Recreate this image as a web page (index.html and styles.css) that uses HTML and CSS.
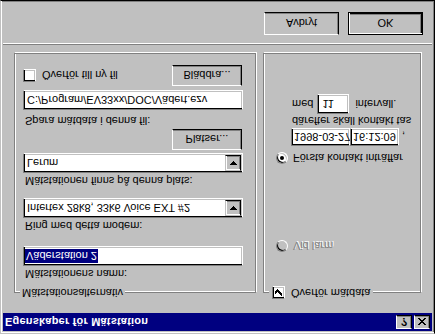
FILE: index.html
```html
<!DOCTYPE html>
<html lang="sv">
<head>
<meta charset="utf-8">
<title>Egenskaper för Mätstation</title>
<link rel="stylesheet" href="styles.css">
</head>
<body>
<div class="window">
  <div class="titlebar">
    <span class="title">Egenskaper för Mätstation</span>
    <span class="capbtn help">?</span>
    <span class="capbtn close"><svg width="8" height="7" viewBox="0 0 8 7" shape-rendering="crispEdges"><path fill="#000" d="M0 0h2v1h-2z M6 0h2v1h-2z M1 1h2v1h-2z M5 1h2v1h-2z M2 2h4v1h-4z M3 3h2v1h-2z M2 4h4v1h-4z M1 5h2v1h-2z M5 5h2v1h-2z M0 6h2v1h-2z M6 6h2v1h-2z"/></svg></span>
  </div>
  <div class="page">
    <fieldset class="group group-left">
      <legend>Mätstationsalternativ</legend>
      <div class="label l1">Mätstationens namn:</div>
      <div class="field f-name"><span class="sel">Väderstation 2</span></div>
      <div class="label l2">Ring med detta modem:</div>
      <div class="field combo c-modem"><span class="val">Intertex 28k8, 33k6 Voice EXT #2</span><span class="drop"><svg width="7" height="4" viewBox="0 0 7 4" shape-rendering="crispEdges"><path fill="#000" d="M0 0h7v1h-1v1h-1v1h-1v1h-1v-1h-1v-1h-1v-1h-1z"/></svg></span></div>
      <div class="label l3">Mätstationen finns på denna plats:</div>
      <div class="field combo c-place"><span class="val">Lerum</span><span class="drop"><svg width="7" height="4" viewBox="0 0 7 4" shape-rendering="crispEdges"><path fill="#000" d="M0 0h7v1h-1v1h-1v1h-1v1h-1v-1h-1v-1h-1v-1h-1z"/></svg></span></div>
      <div class="btnrow r1"><button class="btn small">Platser...</button></div>
      <div class="label l4">Spara mätdata i denna fil:</div>
      <div class="field f-path"><span class="val">C:/Program/EV33xx/DOC/Vädert.ezv</span></div>
      <div class="btnrow r2">
        <span class="check"><span class="box"></span><span>Överför till ny fil</span></span>
        <button class="btn small">Bläddra...</button>
      </div>
    </fieldset>
    <fieldset class="group group-right">
      <legend><span class="box"><svg width="13" height="13" viewBox="0 0 13 13" shape-rendering="crispEdges"><path fill="#000" d="M9 3h1v1h-1z M8 4h2v1h-2z M3 5h1v1h-1z M7 5h3v1h-3z M3 6h2v1h-2z M6 6h3v1h-3z M3 7h5v1h-5z M4 8h3v1h-3z M5 9h1v1h-1z"/></svg></span><span>Överför mätdata</span></legend>
      <div class="radio r-alarm disabled"><span class="dot"></span><span class="rtext">Vid larm</span></div>
      <div class="radio r-first"><span class="dot on"></span><span class="rtext">Första kontakt inträffar</span></div>
      <div class="datetime"><div class="field date">1998-03-27</div><div class="field time">16:12:09</div><span class="comma">,</span></div>
      <div class="label l5">därefter skall kontakt tas</div>
      <div class="interval"><span>med</span><div class="field num">11</div><span>intervall.</span></div>
    </fieldset>
  </div>
  <div class="sep"></div>
  <div class="buttons">
    <button class="btn">Avbryt</button>
    <button class="btn default">OK</button>
  </div>
</div>
</body>
</html>
```

FILE: styles.css
```css
* { box-sizing: border-box; }
html, body { margin: 0; padding: 0; }
body {
  width: 435px;
  height: 334px;
  overflow: hidden;
  background: #c0c0c0;
  font-family: "Liberation Sans", Arial, sans-serif;
  font-size: 11px;
  color: #000;
}
.window {
  width: 435px;
  height: 334px;
  border: 1px solid;
  border-color: #c0c0c0 #000 #000 #c0c0c0;
  box-shadow: inset 1px 1px #fff, inset -1px -1px #808080;
  padding: 2px;
  background: #c0c0c0;
  display: flex;
  flex-direction: column;
  transform: scaleY(-1);
}
.titlebar {
  height: 18px;
  flex: none;
  background: #000080;
  display: flex;
  align-items: center;
  padding: 0 2px;
}
.title {
  flex: 1;
  color: #fff;
  font-weight: bold;
  font-size: 11px;
  line-height: 13px;
  letter-spacing: 0.2px;
  white-space: nowrap;
}
.capbtn {
  width: 16px;
  height: 14px;
  background: #c0c0c0;
  border: 1px solid;
  border-color: #fff #000 #000 #fff;
  box-shadow: inset -1px -1px #808080;
  display: flex;
  align-items: center;
  justify-content: center;
  font-weight: bold;
  font-size: 11px;
  line-height: 11px;
}
.help { margin-right: 2px; }
.page {
  flex: none;
  height: 268px;
  display: flex;
  align-items: flex-start;
  gap: 7px;
  padding: 14px 0 0 11px;
}
.group {
  margin: 0;
  min-width: 0;
  height: 246px;
  border: 1px solid #808080;
  box-shadow: inset 1px 1px #fff, 1px 1px #fff;
  padding: 0 0 0 8px;
}
.group-left { width: 242px; }
.group-right { width: 158px; padding-left: 12px; }
.group legend {
  height: 13px;
  line-height: 13px;
  padding: 0 2px;
  margin-left: -3px;
  background: #c0c0c0;
  white-space: nowrap;
}
.group-right legend {
  display: flex;
  align-items: center;
  gap: 6px;
  margin-left: -7px;
  padding: 0 3px 0 3px;
}
.label {
  height: 13px;
  line-height: 13px;
  padding-left: 2px;
  white-space: nowrap;
}
.field {
  height: 20px;
  background: #fff;
  border: 1px solid;
  border-color: #808080 #fff #fff #808080;
  box-shadow: inset 1px 1px #000, inset -1px -1px #c0c0c0;
  display: flex;
  align-items: center;
  padding: 1px 1px 1px 2px;
  white-space: nowrap;
  line-height: 13px;
}
.group-left .field { width: 220px; }
.l1 { margin-top: 6px; }
.f-name { margin-top: 1px; padding-left: 1px; }
.sel { background: #000080; color: #fff; height: 14px; line-height: 14px; padding: 0 1px 0 1px; }
.l2 { margin-top: 14px; }
.c-modem { margin-top: 1px; }
.l3 { margin-top: 11px; }
.c-place { margin-top: 1px; }
.combo .val { flex: 1; padding-left: 1px; }
.f-path .val { padding-left: 1px; }
.drop {
  width: 16px;
  height: 16px;
  background: #c0c0c0;
  border: 1px solid;
  border-color: #c0c0c0 #000 #000 #c0c0c0;
  box-shadow: inset 1px 1px #fff, inset -1px -1px #808080;
  display: flex;
  align-items: center;
  justify-content: center;
}
.btnrow {
  width: 219px;
  height: 21px;
  display: flex;
  align-items: center;
  justify-content: flex-end;
}
.r1 { margin-top: 3px; }
.l4 { margin-top: 2px; }
.f-path { margin-top: 4px; }
.r2 { margin-top: 4px; justify-content: space-between; }
.btn {
  width: 75px;
  height: 23px;
  padding: 0;
  margin: 0;
  background: #c0c0c0;
  border: 1px solid;
  border-color: #fff #000 #000 #fff;
  box-shadow: inset -1px -1px #808080;
  font-family: "Liberation Sans", Arial, sans-serif;
  font-size: 11px;
  color: #000;
}
.btn.small { width: 70px; height: 21px; }
.btn.default {
  border: 1px solid #000;
  box-shadow: inset 1px 1px #fff, inset -1px -1px #000, inset -2px -2px #808080;
}
.check { display: flex; align-items: center; gap: 6px; }
.box {
  width: 13px;
  height: 13px;
  flex: none;
  background: #fff;
  border: 1px solid;
  border-color: #808080 #fff #fff #808080;
  box-shadow: inset 1px 1px #000, inset -1px -1px #c0c0c0;
  display: block;
  position: relative;
}
.box svg { position: absolute; left: -1px; top: -1px; }
.radio { display: flex; align-items: center; gap: 5px; height: 12px; white-space: nowrap; }
.dot {
  width: 12px;
  height: 12px;
  flex: none;
  border-radius: 50%;
  background: #fff;
  border: 1px solid;
  border-color: #808080 #fff #fff #808080;
  box-shadow: inset 1px 1px #000, inset -1px -1px #c0c0c0;
  display: flex;
  align-items: center;
  justify-content: center;
}
.dot.on::after {
  content: "";
  width: 4px;
  height: 4px;
  border-radius: 50%;
  background: #000;
}
.disabled .dot { background: #c0c0c0; }
.disabled .rtext { color: #808080; text-shadow: 1px 1px #fff; }
.r-alarm { margin-top: 34px; }
.r-first { margin-top: 76px; }
.datetime { display: flex; align-items: center; margin: 6px 0 0 15px; }
.date { width: 59px; height: 18px; }
.time { width: 49px; height: 18px; margin-left: 0; }
.comma { margin-left: 3px; }
.l5 { margin: 1px 0 0 14px; }
.interval { display: flex; align-items: center; height: 20px; margin-left: 16px; }
.num { width: 32px; margin: 0 6px 0 4px; padding-left: 4px; }
.sep {
  flex: none;
  height: 2px;
  border-top: 1px solid #808080;
  border-bottom: 1px solid #fff;
}
.buttons {
  flex: none;
  display: flex;
  justify-content: flex-end;
  gap: 9px;
  margin-top: 8px;
  padding-right: 9px;
}
```
